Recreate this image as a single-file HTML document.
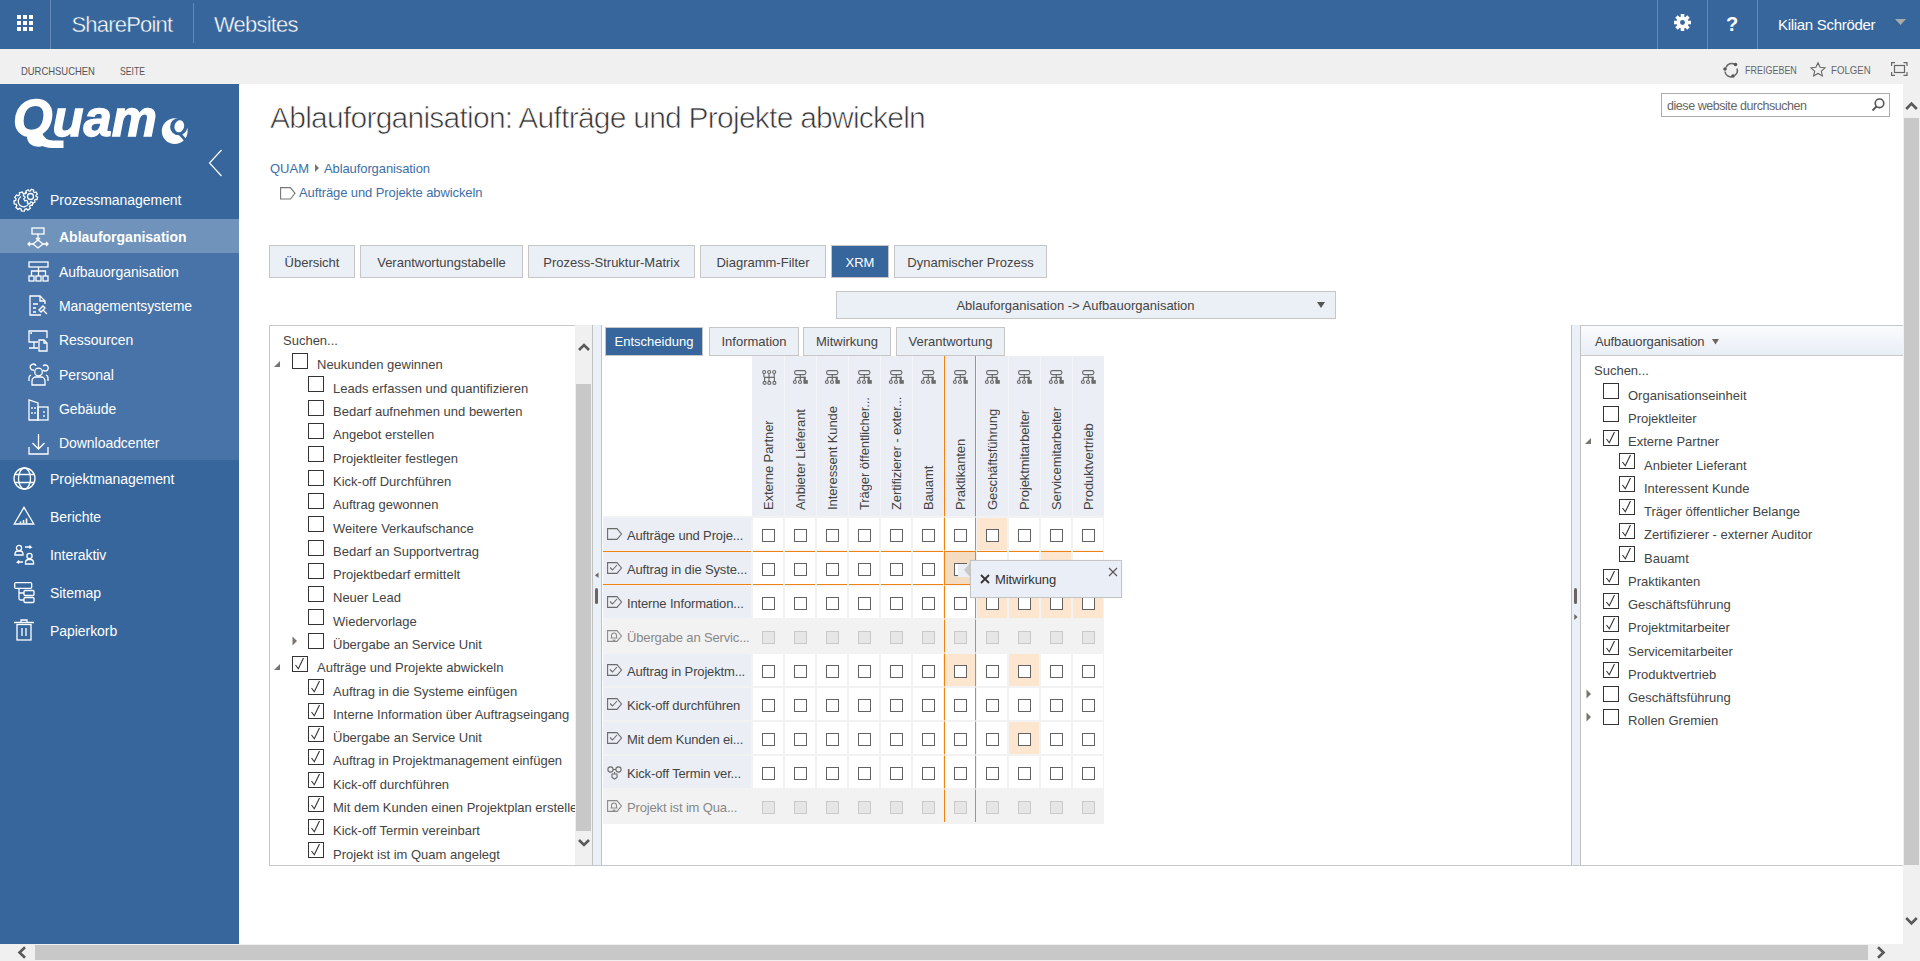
<!DOCTYPE html>
<html><head><meta charset="utf-8">
<style>
*{margin:0;padding:0;box-sizing:border-box}
html,body{width:1920px;height:961px;overflow:hidden;background:#fff;font-family:"Liberation Sans",sans-serif;color:#444}
.a{position:absolute;white-space:nowrap}
svg.a{overflow:visible}
.cb{position:absolute;width:16px;height:16px;border:1px solid #333;background:#fff}
.ck{position:absolute;width:13px;height:13px;border:1px solid #626262;background:#fff}
.dk{position:absolute;width:13px;height:13px;border:1px solid #c9c9c9;background:#e6e6e6}
.tab{position:absolute;height:33px;background:#ebeff6;border:1px solid #c6c6c6;font-size:13px;color:#444;text-align:center;line-height:33px}
</style></head><body>

<div class="a" style="left:0px;top:0px;width:1920px;height:49px;background:#36669b;"></div>
<svg class="a" style="left:17px;top:15px" width="17" height="17" viewBox="0 0 17 17" fill="#fff"><rect x="0" y="0" width="4" height="4"/><rect x="6" y="0" width="4" height="4"/><rect x="12" y="0" width="4" height="4"/><rect x="0" y="6" width="4" height="4"/><rect x="6" y="6" width="4" height="4"/><rect x="12" y="6" width="4" height="4"/><rect x="0" y="12" width="4" height="4"/><rect x="6" y="12" width="4" height="4"/><rect x="12" y="12" width="4" height="4"/></svg>
<div class="a" style="left:50px;top:0px;width:1px;height:49px;background:#6489b4;"></div>
<div class="a" style="left:193px;top:3px;width:1px;height:40px;background:#6489b4;"></div>
<div class="a" style="left:1657px;top:0px;width:1px;height:49px;background:#6489b4;"></div>
<div class="a" style="left:1707px;top:0px;width:1px;height:49px;background:#6489b4;"></div>
<div class="a" style="left:1757px;top:0px;width:1px;height:49px;background:#6489b4;"></div>
<div class="a" style="left:71.5px;top:12.59px;font-size:22px;line-height:24.57px;color:#fff;letter-spacing:-0.8px;-webkit-text-stroke:0.4px #36669b">SharePoint</div>
<div class="a" style="left:214px;top:12.59px;font-size:22px;line-height:24.57px;color:#fff;letter-spacing:-0.8px;-webkit-text-stroke:0.4px #36669b">Websites</div>
<svg class="a" style="left:1674px;top:14px" width="17" height="17" viewBox="0 0 16 16">
<g fill="#fff"><circle cx="8" cy="8" r="5.6"/>
<rect x="6.3" y="0" width="3.4" height="16"/><rect x="0" y="6.3" width="16" height="3.4"/>
<rect x="6.3" y="0" width="3.4" height="16" transform="rotate(45 8 8)"/><rect x="6.3" y="0" width="3.4" height="16" transform="rotate(-45 8 8)"/></g>
<circle cx="8" cy="8" r="2.3" fill="#36669b"/></svg>
<div class="a" style="left:1726px;top:12.90px;font-size:20px;line-height:22.34px;color:#fff;font-weight:700">?</div>
<div class="a" style="left:1778px;top:17.42px;font-size:15px;line-height:16.75px;color:#fff;letter-spacing:-0.3px">Kilian Schröder</div>
<svg class="a" style="left:1895px;top:19px" width="12" height="7"><path d="M0 0H11L5.5 6Z" fill="#a9a9a9"/></svg>
<div class="a" style="left:0px;top:49px;width:1920px;height:35px;background:#f0f0f0;"></div>
<div class="a" style="left:21px;top:64.89px;font-size:11.5px;line-height:12.85px;color:#555;transform:scaleX(0.82);transform-origin:0 0">DURCHSUCHEN</div>
<div class="a" style="left:120px;top:64.89px;font-size:11.5px;line-height:12.85px;color:#555;transform:scaleX(0.75);transform-origin:0 0">SEITE</div>
<svg class="a" style="left:1723px;top:62px" width="16" height="16" viewBox="0 0 16 16">
<path d="M3 5.5A6 6 0 0 1 12 2.5M14 6.5A6 6 0 0 1 11.5 13.5M9 14.8A6 6 0 0 1 2 9.5" stroke="#666" stroke-width="1.5" fill="none"/>
<circle cx="12.5" cy="2.5" r="1.8" fill="#555"/><circle cx="2" cy="7" r="1.8" fill="#555"/><circle cx="10" cy="14" r="1.8" fill="#555"/></svg>
<div class="a" style="left:1745px;top:63.89px;font-size:11.5px;line-height:12.85px;color:#666;transform:scaleX(0.78);transform-origin:0 0">FREIGEBEN</div>
<svg class="a" style="left:1810px;top:62px" width="16" height="15" viewBox="0 0 16 15">
<path d="M8 0.8L10.1 5.3L15 5.8L11.3 9.1L12.4 14L8 11.5L3.6 14L4.7 9.1L1 5.8L5.9 5.3Z" fill="none" stroke="#666" stroke-width="1.1"/></svg>
<div class="a" style="left:1831px;top:63.89px;font-size:11.5px;line-height:12.85px;color:#666;transform:scaleX(0.84);transform-origin:0 0">FOLGEN</div>
<svg class="a" style="left:1891px;top:62px" width="17" height="14" viewBox="0 0 17 14" fill="none" stroke="#666" stroke-width="1.2">
<path d="M0.6 4V0.6H4M12.5 0.6H16V4M16 10V13.4H12.5M4 13.4H0.6V10"/><rect x="3.5" y="3.5" width="10" height="7"/></svg>
<div class="a" style="left:0px;top:84px;width:239px;height:860px;background:#36669b;"></div>
<div class="a" style="left:0px;top:219px;width:239px;height:240.5px;background:#4773a8;"></div>
<div class="a" style="left:0px;top:219px;width:239px;height:34px;background:#7093bb;"></div>
<svg class="a" style="left:0;top:84px" width="239" height="80" viewBox="0 84 239 80">
<text x="13" y="136" font-family="Liberation Sans" font-weight="700" font-style="italic" font-size="52" fill="#fff" stroke="#fff" stroke-width="1.3" textLength="144" lengthAdjust="spacingAndGlyphs">Quam</text>
<path d="M32 133Q37 148 52 148L63.5 148L63.5 140.5L53 140.5Q45 140.5 42 133Z" fill="#fff"/>
<circle cx="174.7" cy="131.2" r="12.9" fill="#fff"/>
<circle cx="178.7" cy="126.7" r="8.6" fill="#36669b"/>
<ellipse cx="179.3" cy="126.3" rx="4.8" ry="6.1" fill="#fff" transform="rotate(12 179.3 126.3)"/>
<path d="M179.5 133.5L187 142" stroke="#36669b" stroke-width="2.8"/>
</svg>
<svg class="a" style="left:208px;top:149px" width="15" height="28"><path d="M13.5 1L1.5 14L13.5 27" stroke="#fff" stroke-width="1.2" fill="none"/></svg>
<div class="a" style="left:50px;top:193.33px;font-size:14px;line-height:15.64px;color:#fff;letter-spacing:-0.05px">Prozessmanagement</div>
<div class="a" style="left:50px;top:472.33px;font-size:14px;line-height:15.64px;color:#fff;letter-spacing:-0.05px">Projektmanagement</div>
<div class="a" style="left:50px;top:510.33px;font-size:14px;line-height:15.64px;color:#fff;letter-spacing:-0.05px">Berichte</div>
<div class="a" style="left:50px;top:548.33px;font-size:14px;line-height:15.64px;color:#fff;letter-spacing:-0.05px">Interaktiv</div>
<div class="a" style="left:50px;top:586.33px;font-size:14px;line-height:15.64px;color:#fff;letter-spacing:-0.05px">Sitemap</div>
<div class="a" style="left:50px;top:624.33px;font-size:14px;line-height:15.64px;color:#fff;letter-spacing:-0.05px">Papierkorb</div>
<div class="a" style="left:59px;top:230.33px;font-size:14px;line-height:15.64px;color:#fff;font-weight:700">Ablauforganisation</div>
<div class="a" style="left:59px;top:264.66px;font-size:14px;line-height:15.64px;color:#fff;letter-spacing:-0.05px">Aufbauorganisation</div>
<div class="a" style="left:59px;top:298.99px;font-size:14px;line-height:15.64px;color:#fff;letter-spacing:-0.05px">Managementsysteme</div>
<div class="a" style="left:59px;top:333.32px;font-size:14px;line-height:15.64px;color:#fff;letter-spacing:-0.05px">Ressourcen</div>
<div class="a" style="left:59px;top:367.65px;font-size:14px;line-height:15.64px;color:#fff;letter-spacing:-0.05px">Personal</div>
<div class="a" style="left:59px;top:401.98px;font-size:14px;line-height:15.64px;color:#fff;letter-spacing:-0.05px">Gebäude</div>
<div class="a" style="left:59px;top:436.31px;font-size:14px;line-height:15.64px;color:#fff;letter-spacing:-0.05px">Downloadcenter</div>
<svg class="a" style="left:0;top:180px" width="50" height="40" viewBox="0 180 50 40"><g stroke="#fff" stroke-width="1.3" fill="none"><path d="M31.40 201.50L33.07 202.30L32.35 205.22L30.50 205.16L29.55 206.58L30.31 208.26L27.89 210.04L26.51 208.80L24.87 209.28L24.37 211.06L21.37 210.86L21.11 209.03L19.55 208.34L18.02 209.38L15.85 207.30L16.83 205.73L16.08 204.20L14.24 204.02L13.91 201.03L15.67 200.46L16.08 198.80L14.79 197.47L16.46 194.98L18.17 195.67L19.55 194.66L19.41 192.81L22.30 191.98L23.17 193.61L24.87 193.72L25.95 192.22L28.70 193.43L28.32 195.24L29.55 196.42L31.34 195.97L32.67 198.66L31.22 199.80Z"/><path d="M21 196.5A5.5 5.5 0 1 0 28.5 204"/></g><path d="M36.10 196.50L37.67 197.18L36.99 199.62L35.30 199.39L34.46 200.46L35.09 202.05L32.89 203.29L31.85 201.93L30.50 202.10L29.82 203.67L27.38 202.99L27.61 201.30L26.54 200.46L24.95 201.09L23.71 198.89L25.07 197.85L24.90 196.50L23.33 195.82L24.01 193.38L25.70 193.61L26.54 192.54L25.91 190.95L28.11 189.71L29.15 191.07L30.50 190.90L31.18 189.33L33.62 190.01L33.39 191.70L34.46 192.54L36.05 191.91L37.29 194.11L35.93 195.15Z" fill="#36669b" stroke="#fff" stroke-width="1.2"/><circle cx="30.5" cy="196.5" r="3" stroke="#fff" stroke-width="1.3" fill="none"/></svg>
<svg class="a" style="left:13px;top:467px" width="23" height="23" viewBox="0 0 23 23"><g stroke="#fff" stroke-width="1.3" fill="none"><circle cx="11.5" cy="11.5" r="10.5"/><ellipse cx="11.5" cy="11.5" rx="6" ry="10.5"/><path d="M2 7.5H21M2 15.5H21"/></g></svg>
<svg class="a" style="left:13px;top:506px" width="22" height="20" viewBox="0 0 22 20"><g stroke="#fff" stroke-width="1.3" fill="none"><path d="M11 1.3L20.8 18H1.2Z"/><path d="M7.5 17.5V15.5M10.5 17.5V14M13.5 17.5V12.5" stroke-width="1.6"/></g></svg>
<svg class="a" style="left:14px;top:544px" width="22" height="22" viewBox="0 0 22 22"><g stroke="#fff" stroke-width="1.3" fill="none"><circle cx="5" cy="4" r="2.6"/><path d="M1 11V9.5A3 3 0 0 1 4 7H6A3 3 0 0 1 9 9.5V11Z"/><circle cx="15.5" cy="12" r="2.6"/><path d="M11.5 20V18A3 3 0 0 1 14.5 15.5H16.5A3 3 0 0 1 19.5 18V20Z"/><path d="M11 3H17L15.5 1.5M17 3L15.5 4.5M9 18H3.5L5 16.5M3.5 18L5 19.5"/></g></svg>
<svg class="a" style="left:14px;top:582px" width="21" height="22" viewBox="0 0 21 22"><g stroke="#fff" stroke-width="1.3" fill="none"><rect x="0.7" y="0.7" width="17" height="5.6" rx="1"/><rect x="10" y="8.5" width="10" height="5" rx="1"/><rect x="10" y="15.5" width="10" height="5" rx="1"/><path d="M5 6.3V16.5Q5 18 6.5 18H10M5 11H10"/></g></svg>
<svg class="a" style="left:14px;top:619px" width="21" height="22" viewBox="0 0 21 22"><g stroke="#fff" stroke-width="1.3" fill="none"><path d="M0 3.5H20M7 3.5V1H13V3.5"/><rect x="3" y="5.5" width="14" height="15.5"/><path d="M8 9V17M12 9V17"/></g></svg>
<svg class="a" style="left:27px;top:227px" width="22" height="22" viewBox="0 0 22 22"><g stroke="#fff" stroke-width="1.3" fill="none"><rect x="5" y="1" width="12" height="6"/><path d="M11 7V13M9 11L11 13L13 11"/><path d="M11 13L16 17L11 21L6 17Z"/><path d="M6 17H1M16 17H21M3 15L1 17L3 19M19 15L21 17L19 19"/></g></svg>
<svg class="a" style="left:28px;top:261px" width="21" height="21" viewBox="0 0 21 21"><g stroke="#fff" stroke-width="1.3" fill="none"><rect x="1" y="1" width="19" height="5"/><path d="M10.5 6V10M3.5 15V10H17.5V15M10.5 10V15"/><rect x="1" y="15" width="5" height="5"/><rect x="8" y="15" width="5" height="5"/><rect x="15" y="15" width="5" height="5"/></g></svg>
<svg class="a" style="left:29px;top:295px" width="20" height="22" viewBox="0 0 20 22"><g stroke="#fff" stroke-width="1.3" fill="none"><path d="M12 20H1V1H11L16 6V9"/><path d="M11 1V6H16M4 9H9M4 13H7M4 17H7"/><path d="M10 15L14 11L16 13L12 17ZM14 15L18 19"/></g></svg>
<svg class="a" style="left:28px;top:330px" width="21" height="22" viewBox="0 0 21 22"><g stroke="#fff" stroke-width="1.3" fill="none"><path d="M19 8V1H1V12H10"/><path d="M3 4V3H4"/><path d="M1 18H10M6 12V18"/><path d="M11 21V10H16L19 13V21Z"/><path d="M16 10V13H19"/></g></svg>
<svg class="a" style="left:28px;top:364px" width="21" height="22" viewBox="0 0 21 22"><g stroke="#fff" stroke-width="1.3" fill="none"><circle cx="10.5" cy="8" r="3.8"/><path d="M4 21V17A4 4 0 0 1 8 13H13A4 4 0 0 1 17 17V21Z"/><path d="M6 6A3 3 0 1 1 8 2M15 2A3 3 0 1 1 15 6M1 17V14A3 3 0 0 1 3 11M20 17V14A3 3 0 0 0 18 11"/></g></svg>
<svg class="a" style="left:28px;top:399px" width="21" height="22" viewBox="0 0 21 22"><g stroke="#fff" stroke-width="1.3" fill="none"><path d="M1 21V1L10 4V21Z"/><rect x="10" y="8" width="10" height="13"/><path d="M4 8V10M4 13V15M7 8V10M7 13V15M16 12V14M16 16V18"/></g></svg>
<svg class="a" style="left:28px;top:433px" width="21" height="22" viewBox="0 0 21 22"><g stroke="#fff" stroke-width="1.3" fill="none"><path d="M1 14V21H20V14M10.5 1V16M4.5 10L10.5 16L16.5 10"/></g></svg>
<div class="a" style="left:270px;top:101.25px;font-size:30px;line-height:33.51px;color:#333;font-weight:300;letter-spacing:-0.76px;-webkit-text-stroke:0.7px #fff">Ablauforganisation: Aufträge und Projekte abwickeln</div>
<div class="a" style="left:270px;top:162.04px;font-size:13px;line-height:14.52px;color:#3d6fa6">QUAM</div>
<svg class="a" style="left:314px;top:163px" width="6" height="10"><path d="M1 1L5 5L1 9Z" fill="#777"/></svg>
<div class="a" style="left:324px;top:162.04px;font-size:13px;line-height:14.52px;color:#3d6fa6;letter-spacing:-0.1px">Ablauforganisation</div>
<svg class="a" style="left:280px;top:187px" width="16" height="13" viewBox="0 0 16 13"><path d="M0.6 0.6H10.5L15 6.3L10.5 12H0.6Z" fill="none" stroke="#777" stroke-width="1.1"/></svg>
<div class="a" style="left:299px;top:185.94px;font-size:13px;line-height:14.52px;color:#3d6fa6;letter-spacing:-0.1px">Aufträge und Projekte abwickeln</div>
<div class="a" style="left:1661px;top:93px;width:229px;height:24px;border:1px solid #ababab;background:#fff"></div>
<div class="a" style="left:1667px;top:100.19px;font-size:12.5px;line-height:13.96px;color:#666;letter-spacing:-0.45px">diese website durchsuchen</div>
<svg class="a" style="left:1870px;top:97px" width="16" height="16" viewBox="0 0 16 16"><circle cx="9.5" cy="6.3" r="4.3" stroke="#555" stroke-width="1.6" fill="none"/><path d="M6.5 9.5L2.5 13.5" stroke="#555" stroke-width="1.8"/></svg>
<div class="tab" style="left:269px;top:245px;width:86px">Übersicht</div>
<div class="tab" style="left:360px;top:245px;width:163px">Verantwortungstabelle</div>
<div class="tab" style="left:528px;top:245px;width:167px">Prozess-Struktur-Matrix</div>
<div class="tab" style="left:700px;top:245px;width:126px">Diagramm-Filter</div>
<div class="tab" style="left:831px;top:245px;width:58px;background:#36669b;border-color:#c6c6c6;color:#fff">XRM</div>
<div class="tab" style="left:894px;top:245px;width:153px">Dynamischer Prozess</div>
<div class="tab" style="left:836px;top:291px;width:500px;height:28px;line-height:27px;padding-right:21px">Ablauforganisation -&gt; Aufbauorganisation</div>
<svg class="a" style="left:1317px;top:302px" width="9" height="7"><path d="M0 0H8L4 6Z" fill="#555"/></svg>
<div class="a" style="left:269px;top:325px;width:307px;height:541px;border:1px solid #c8c8c8;border-right:none;background:#fff"></div>
<div class="a" style="left:269px;top:865px;width:1634px;height:1px;background:#c8c8c8;"></div>
<div class="a" style="left:575px;top:325px;width:17px;height:540px;background:#f0f0f0;"></div>
<div class="a" style="left:576px;top:384px;width:15px;height:447px;background:#c8c8c8;"></div>
<svg class="a" style="left:578px;top:342px" width="12" height="9"><path d="M1 8L6 3L11 8" stroke="#595959" stroke-width="2.6" fill="none"/></svg>
<svg class="a" style="left:578px;top:839px" width="12" height="9"><path d="M1 1L6 6L11 1" stroke="#595959" stroke-width="2.6" fill="none"/></svg>
<div class="a" style="left:592px;top:325px;width:10px;height:540px;background:#eaf0f8;border-left:1px solid #c2c2c2;border-right:1px solid #c2c2c2"></div>
<svg class="a" style="left:595px;top:572px" width="5" height="7"><path d="M3.5 0.5V6L0 3.25Z" fill="#6d6460"/></svg>
<div class="a" style="left:595px;top:588px;width:3px;height:16px;background:#6d6460;border-radius:1.5px"></div>
<div class="a" style="left:1571px;top:325px;width:10px;height:540px;background:#eaf0f8;border-left:1px solid #c2c2c2;border-right:1px solid #c2c2c2"></div>
<div class="a" style="left:1574px;top:588px;width:3px;height:16px;background:#6d6460;border-radius:1.5px"></div>
<svg class="a" style="left:1574px;top:614px" width="5" height="7"><path d="M0.3 0V6L3.6 3Z" fill="#6d6460"/></svg>
<div class="a" style="left:1581px;top:325px;width:322px;height:31px;background:linear-gradient(#fafbfd,#e9eef6);border-top:1px solid #c8c8c8;border-bottom:1px solid #c8c8c8"></div>
<div class="a" style="left:1595px;top:335.24px;font-size:13px;line-height:14.52px;color:#444;letter-spacing:-0.15px">Aufbauorganisation</div>
<svg class="a" style="left:1712px;top:339px" width="8" height="6"><path d="M0 0H7L3.5 5.5Z" fill="#6d6460"/></svg>
<div class="a" style="left:1903px;top:84px;width:17px;height:860px;background:#f0f0f0;"></div>
<div class="a" style="left:1904px;top:118px;width:15px;height:747px;background:#c8c8c8;"></div>
<svg class="a" style="left:1905px;top:100px" width="13" height="10"><path d="M1.2 9L6.5 3.5L11.8 9" stroke="#595959" stroke-width="2.6" fill="none"/></svg>
<svg class="a" style="left:1905px;top:917px" width="13" height="10"><path d="M1.2 1L6.5 6.5L11.8 1" stroke="#595959" stroke-width="2.6" fill="none"/></svg>
<div class="a" style="left:0px;top:944px;width:1920px;height:17px;background:#f0f0f0;"></div>
<div class="a" style="left:35px;top:945px;width:1833px;height:15px;background:#c8c8c8;"></div>
<svg class="a" style="left:16px;top:946px" width="10" height="13"><path d="M9 1.2L3.5 6.5L9 11.8" stroke="#595959" stroke-width="2.6" fill="none"/></svg>
<svg class="a" style="left:1877px;top:946px" width="10" height="13"><path d="M1 1.2L6.5 6.5L1 11.8" stroke="#595959" stroke-width="2.6" fill="none"/></svg>
<div class="a" style="left:283px;top:334.24px;font-size:13px;line-height:14.52px;color:#444">Suchen...</div>
<div class="a" style="left:270px;top:326px;width:305px;height:539px;overflow:hidden">
<div class="cb" style="left:22px;top:27px"></div>
<svg class="a" style="left:4px;top:35px" width="7" height="7"><path d="M6 0V6H0Z" fill="#7a7470"/></svg>
<div class="a" style="left:47px;top:32.49px;font-size:13px;line-height:14.5px;color:#444">Neukunden gewinnen</div>
<div class="cb" style="left:38px;top:50px"></div>
<div class="a" style="left:63px;top:55.78px;font-size:13px;line-height:14.5px;color:#444">Leads erfassen und quantifizieren</div>
<div class="cb" style="left:38px;top:74px"></div>
<div class="a" style="left:63px;top:79.06px;font-size:13px;line-height:14.5px;color:#444">Bedarf aufnehmen und bewerten</div>
<div class="cb" style="left:38px;top:97px"></div>
<div class="a" style="left:63px;top:102.36px;font-size:13px;line-height:14.5px;color:#444">Angebot erstellen</div>
<div class="cb" style="left:38px;top:120px"></div>
<div class="a" style="left:63px;top:125.64px;font-size:13px;line-height:14.5px;color:#444">Projektleiter festlegen</div>
<div class="cb" style="left:38px;top:144px"></div>
<div class="a" style="left:63px;top:148.94px;font-size:13px;line-height:14.5px;color:#444">Kick-off Durchführen</div>
<div class="cb" style="left:38px;top:167px"></div>
<div class="a" style="left:63px;top:172.23px;font-size:13px;line-height:14.5px;color:#444">Auftrag gewonnen</div>
<div class="cb" style="left:38px;top:190px"></div>
<div class="a" style="left:63px;top:195.51px;font-size:13px;line-height:14.5px;color:#444">Weitere Verkaufschance</div>
<div class="cb" style="left:38px;top:214px"></div>
<div class="a" style="left:63px;top:218.80px;font-size:13px;line-height:14.5px;color:#444">Bedarf an Supportvertrag</div>
<div class="cb" style="left:38px;top:237px"></div>
<div class="a" style="left:63px;top:242.10px;font-size:13px;line-height:14.5px;color:#444">Projektbedarf ermittelt</div>
<div class="cb" style="left:38px;top:260px"></div>
<div class="a" style="left:63px;top:265.38px;font-size:13px;line-height:14.5px;color:#444">Neuer Lead</div>
<div class="cb" style="left:38px;top:283px"></div>
<div class="a" style="left:63px;top:288.68px;font-size:13px;line-height:14.5px;color:#444">Wiedervorlage</div>
<div class="cb" style="left:38px;top:307px"></div>
<svg class="a" style="left:22px;top:310px" width="6" height="10"><path d="M0.5 0.5L5 5L0.5 9.5Z" fill="#7a7470"/></svg>
<div class="a" style="left:63px;top:311.97px;font-size:13px;line-height:14.5px;color:#444">Übergabe an Service Unit</div>
<div class="cb" style="left:22px;top:330px"></div>
<svg class="a" style="left:22px;top:330px" width="16" height="16"><path d="M3.5 9L6.3 12.8L11.5 2" stroke="#333" stroke-width="1.1" fill="none"/></svg>
<svg class="a" style="left:4px;top:338px" width="7" height="7"><path d="M6 0V6H0Z" fill="#7a7470"/></svg>
<div class="a" style="left:47px;top:335.25px;font-size:13px;line-height:14.5px;color:#444">Aufträge und Projekte abwickeln</div>
<div class="cb" style="left:38px;top:353px"></div>
<svg class="a" style="left:38px;top:353px" width="16" height="16"><path d="M3.5 9L6.3 12.8L11.5 2" stroke="#333" stroke-width="1.1" fill="none"/></svg>
<div class="a" style="left:63px;top:358.54px;font-size:13px;line-height:14.5px;color:#444">Auftrag in die Systeme einfügen</div>
<div class="cb" style="left:38px;top:377px"></div>
<svg class="a" style="left:38px;top:377px" width="16" height="16"><path d="M3.5 9L6.3 12.8L11.5 2" stroke="#333" stroke-width="1.1" fill="none"/></svg>
<div class="a" style="left:63px;top:381.83px;font-size:13px;line-height:14.5px;color:#444">Interne Information über Auftragseingang</div>
<div class="cb" style="left:38px;top:400px"></div>
<svg class="a" style="left:38px;top:400px" width="16" height="16"><path d="M3.5 9L6.3 12.8L11.5 2" stroke="#333" stroke-width="1.1" fill="none"/></svg>
<div class="a" style="left:63px;top:405.12px;font-size:13px;line-height:14.5px;color:#444">Übergabe an Service Unit</div>
<div class="cb" style="left:38px;top:423px"></div>
<svg class="a" style="left:38px;top:423px" width="16" height="16"><path d="M3.5 9L6.3 12.8L11.5 2" stroke="#333" stroke-width="1.1" fill="none"/></svg>
<div class="a" style="left:63px;top:428.42px;font-size:13px;line-height:14.5px;color:#444">Auftrag in Projektmanagement einfügen</div>
<div class="cb" style="left:38px;top:446px"></div>
<svg class="a" style="left:38px;top:446px" width="16" height="16"><path d="M3.5 9L6.3 12.8L11.5 2" stroke="#333" stroke-width="1.1" fill="none"/></svg>
<div class="a" style="left:63px;top:451.71px;font-size:13px;line-height:14.5px;color:#444">Kick-off durchführen</div>
<div class="cb" style="left:38px;top:470px"></div>
<svg class="a" style="left:38px;top:470px" width="16" height="16"><path d="M3.5 9L6.3 12.8L11.5 2" stroke="#333" stroke-width="1.1" fill="none"/></svg>
<div class="a" style="left:63px;top:475.00px;font-size:13px;line-height:14.5px;color:#444">Mit dem Kunden einen Projektplan erstellen</div>
<div class="cb" style="left:38px;top:493px"></div>
<svg class="a" style="left:38px;top:493px" width="16" height="16"><path d="M3.5 9L6.3 12.8L11.5 2" stroke="#333" stroke-width="1.1" fill="none"/></svg>
<div class="a" style="left:63px;top:498.28px;font-size:13px;line-height:14.5px;color:#444">Kick-off Termin vereinbart</div>
<div class="cb" style="left:38px;top:516px"></div>
<svg class="a" style="left:38px;top:516px" width="16" height="16"><path d="M3.5 9L6.3 12.8L11.5 2" stroke="#333" stroke-width="1.1" fill="none"/></svg>
<div class="a" style="left:63px;top:521.57px;font-size:13px;line-height:14.5px;color:#444">Projekt ist im Quam angelegt</div>
</div>
<div class="a" style="left:1594px;top:363.63px;font-size:13px;line-height:14.52px;color:#444">Suchen...</div>
<div class="cb" style="left:1603px;top:383px"></div>
<div class="a" style="left:1628px;top:388.74px;font-size:13px;line-height:14.52px;color:#444">Organisationseinheit</div>
<div class="cb" style="left:1603px;top:406px"></div>
<div class="a" style="left:1628px;top:412.00px;font-size:13px;line-height:14.52px;color:#444">Projektleiter</div>
<div class="cb" style="left:1603px;top:430px"></div>
<svg class="a" style="left:1603px;top:430px" width="16" height="16"><path d="M3.5 9L6.3 12.8L11.5 2" stroke="#333" stroke-width="1.1" fill="none"/></svg>
<svg class="a" style="left:1585px;top:438px" width="7" height="7"><path d="M6 0V6H0Z" fill="#7a7470"/></svg>
<div class="a" style="left:1628px;top:435.25px;font-size:13px;line-height:14.52px;color:#444">Externe Partner</div>
<div class="cb" style="left:1619px;top:453px"></div>
<svg class="a" style="left:1619px;top:453px" width="16" height="16"><path d="M3.5 9L6.3 12.8L11.5 2" stroke="#333" stroke-width="1.1" fill="none"/></svg>
<div class="a" style="left:1644px;top:458.51px;font-size:13px;line-height:14.52px;color:#444">Anbieter Lieferant</div>
<div class="cb" style="left:1619px;top:476px"></div>
<svg class="a" style="left:1619px;top:476px" width="16" height="16"><path d="M3.5 9L6.3 12.8L11.5 2" stroke="#333" stroke-width="1.1" fill="none"/></svg>
<div class="a" style="left:1644px;top:481.78px;font-size:13px;line-height:14.52px;color:#444">Interessent Kunde</div>
<div class="cb" style="left:1619px;top:499px"></div>
<svg class="a" style="left:1619px;top:499px" width="16" height="16"><path d="M3.5 9L6.3 12.8L11.5 2" stroke="#333" stroke-width="1.1" fill="none"/></svg>
<div class="a" style="left:1644px;top:505.03px;font-size:13px;line-height:14.52px;color:#444">Träger öffentlicher Belange</div>
<div class="cb" style="left:1619px;top:523px"></div>
<svg class="a" style="left:1619px;top:523px" width="16" height="16"><path d="M3.5 9L6.3 12.8L11.5 2" stroke="#333" stroke-width="1.1" fill="none"/></svg>
<div class="a" style="left:1644px;top:528.29px;font-size:13px;line-height:14.52px;color:#444">Zertifizierer - externer Auditor</div>
<div class="cb" style="left:1619px;top:546px"></div>
<svg class="a" style="left:1619px;top:546px" width="16" height="16"><path d="M3.5 9L6.3 12.8L11.5 2" stroke="#333" stroke-width="1.1" fill="none"/></svg>
<div class="a" style="left:1644px;top:551.56px;font-size:13px;line-height:14.52px;color:#444">Bauamt</div>
<div class="cb" style="left:1603px;top:569px"></div>
<svg class="a" style="left:1603px;top:569px" width="16" height="16"><path d="M3.5 9L6.3 12.8L11.5 2" stroke="#333" stroke-width="1.1" fill="none"/></svg>
<div class="a" style="left:1628px;top:574.82px;font-size:13px;line-height:14.52px;color:#444">Praktikanten</div>
<div class="cb" style="left:1603px;top:593px"></div>
<svg class="a" style="left:1603px;top:593px" width="16" height="16"><path d="M3.5 9L6.3 12.8L11.5 2" stroke="#333" stroke-width="1.1" fill="none"/></svg>
<div class="a" style="left:1628px;top:598.08px;font-size:13px;line-height:14.52px;color:#444">Geschäftsführung</div>
<div class="cb" style="left:1603px;top:616px"></div>
<svg class="a" style="left:1603px;top:616px" width="16" height="16"><path d="M3.5 9L6.3 12.8L11.5 2" stroke="#333" stroke-width="1.1" fill="none"/></svg>
<div class="a" style="left:1628px;top:621.34px;font-size:13px;line-height:14.52px;color:#444">Projektmitarbeiter</div>
<div class="cb" style="left:1603px;top:639px"></div>
<svg class="a" style="left:1603px;top:639px" width="16" height="16"><path d="M3.5 9L6.3 12.8L11.5 2" stroke="#333" stroke-width="1.1" fill="none"/></svg>
<div class="a" style="left:1628px;top:644.60px;font-size:13px;line-height:14.52px;color:#444">Servicemitarbeiter</div>
<div class="cb" style="left:1603px;top:662px"></div>
<svg class="a" style="left:1603px;top:662px" width="16" height="16"><path d="M3.5 9L6.3 12.8L11.5 2" stroke="#333" stroke-width="1.1" fill="none"/></svg>
<div class="a" style="left:1628px;top:667.86px;font-size:13px;line-height:14.52px;color:#444">Produktvertrieb</div>
<div class="cb" style="left:1603px;top:686px"></div>
<svg class="a" style="left:1586px;top:689px" width="6" height="10"><path d="M0.5 0.5L5 5L0.5 9.5Z" fill="#7a7470"/></svg>
<div class="a" style="left:1628px;top:691.12px;font-size:13px;line-height:14.52px;color:#444">Geschäftsführung</div>
<div class="cb" style="left:1603px;top:709px"></div>
<svg class="a" style="left:1586px;top:712px" width="6" height="10"><path d="M0.5 0.5L5 5L0.5 9.5Z" fill="#7a7470"/></svg>
<div class="a" style="left:1628px;top:714.38px;font-size:13px;line-height:14.52px;color:#444">Rollen Gremien</div>
<div class="tab" style="left:605px;top:327px;width:98px;height:29px;line-height:27px;background:#36669b;color:#fff;border-color:#c6c6c6">Entscheidung</div>
<div class="tab" style="left:709px;top:327px;width:90px;height:29px;line-height:27px">Information</div>
<div class="tab" style="left:803px;top:327px;width:88px;height:29px;line-height:27px">Mitwirkung</div>
<div class="tab" style="left:896px;top:327px;width:109px;height:29px;line-height:27px">Verantwortung</div>
<div class="a" style="left:752px;top:356px;width:352px;height:160px;background:#ebeff5;"></div>
<div class="a" style="left:783.5px;top:356px;width:1px;height:160px;background:#f3f5f8;"></div>
<div class="a" style="left:815.5px;top:356px;width:1px;height:160px;background:#f3f5f8;"></div>
<div class="a" style="left:847.5px;top:356px;width:1px;height:160px;background:#f3f5f8;"></div>
<div class="a" style="left:879.5px;top:356px;width:1px;height:160px;background:#f3f5f8;"></div>
<div class="a" style="left:911.5px;top:356px;width:1px;height:160px;background:#f3f5f8;"></div>
<div class="a" style="left:943.5px;top:356px;width:1px;height:160px;background:#f3f5f8;"></div>
<div class="a" style="left:975.5px;top:356px;width:1px;height:160px;background:#f3f5f8;"></div>
<div class="a" style="left:1007.5px;top:356px;width:1px;height:160px;background:#f3f5f8;"></div>
<div class="a" style="left:1039.5px;top:356px;width:1px;height:160px;background:#f3f5f8;"></div>
<div class="a" style="left:1071.5px;top:356px;width:1px;height:160px;background:#f3f5f8;"></div>
<svg class="a" style="left:762px;top:369px" width="16" height="17" viewBox="0 0 16 17"><g fill="none" stroke="#6a6a6a" stroke-width="1.15"><circle cx="2.2" cy="3" r="1.5"/><circle cx="7.2" cy="3" r="1.5"/><circle cx="12.2" cy="3" r="1.5"/><circle cx="2.6" cy="13.9" r="1.5"/><circle cx="7.3" cy="13.9" r="1.5"/><circle cx="12.4" cy="13.9" r="1.5"/><path d="M1.9 4.5V8.3M7 4.5V12.4M12.2 4.5V8.3M2.5 8.3H12.2M2.6 8.3V12.4M12.4 8.3V12.4"/></g></svg>
<div class="a" style="left:759px;top:393px;width:20px;height:117px;font-size:13px;line-height:20px;color:#444;writing-mode:vertical-rl;transform:rotate(180deg);text-align:left;overflow:hidden;letter-spacing:-0.1px">Externe Partner</div>
<svg class="a" style="left:793px;top:369px" width="16" height="16" viewBox="0 0 16 16"><g fill="none" stroke="#6a6a6a" stroke-width="1.15"><rect x="1.6" y="1.6" width="11.3" height="4" rx="1.8"/><path d="M7.3 5.6V8.4M2.3 11.6V9.6Q2.3 8.4 3.5 8.4H12.5M7.3 8.4V11.6"/><circle cx="1.9" cy="13" r="1.5"/><circle cx="7" cy="13" r="1.5"/></g><rect x="10.6" y="7.8" width="2.2" height="4" fill="#6a6a6a"/><rect x="10.4" y="11.1" width="4.4" height="3.7" fill="#6a6a6a"/></svg>
<div class="a" style="left:791px;top:393px;width:20px;height:117px;font-size:13px;line-height:20px;color:#444;writing-mode:vertical-rl;transform:rotate(180deg);text-align:left;overflow:hidden;letter-spacing:-0.1px">Anbieter Lieferant</div>
<svg class="a" style="left:825px;top:369px" width="16" height="16" viewBox="0 0 16 16"><g fill="none" stroke="#6a6a6a" stroke-width="1.15"><rect x="1.6" y="1.6" width="11.3" height="4" rx="1.8"/><path d="M7.3 5.6V8.4M2.3 11.6V9.6Q2.3 8.4 3.5 8.4H12.5M7.3 8.4V11.6"/><circle cx="1.9" cy="13" r="1.5"/><circle cx="7" cy="13" r="1.5"/></g><rect x="10.6" y="7.8" width="2.2" height="4" fill="#6a6a6a"/><rect x="10.4" y="11.1" width="4.4" height="3.7" fill="#6a6a6a"/></svg>
<div class="a" style="left:823px;top:393px;width:20px;height:117px;font-size:13px;line-height:20px;color:#444;writing-mode:vertical-rl;transform:rotate(180deg);text-align:left;overflow:hidden;letter-spacing:-0.1px">Interessent Kunde</div>
<svg class="a" style="left:857px;top:369px" width="16" height="16" viewBox="0 0 16 16"><g fill="none" stroke="#6a6a6a" stroke-width="1.15"><rect x="1.6" y="1.6" width="11.3" height="4" rx="1.8"/><path d="M7.3 5.6V8.4M2.3 11.6V9.6Q2.3 8.4 3.5 8.4H12.5M7.3 8.4V11.6"/><circle cx="1.9" cy="13" r="1.5"/><circle cx="7" cy="13" r="1.5"/></g><rect x="10.6" y="7.8" width="2.2" height="4" fill="#6a6a6a"/><rect x="10.4" y="11.1" width="4.4" height="3.7" fill="#6a6a6a"/></svg>
<div class="a" style="left:855px;top:393px;width:20px;height:117px;font-size:13px;line-height:20px;color:#444;writing-mode:vertical-rl;transform:rotate(180deg);text-align:left;overflow:hidden;letter-spacing:-0.1px">Träger öffentlicher...</div>
<svg class="a" style="left:889px;top:369px" width="16" height="16" viewBox="0 0 16 16"><g fill="none" stroke="#6a6a6a" stroke-width="1.15"><rect x="1.6" y="1.6" width="11.3" height="4" rx="1.8"/><path d="M7.3 5.6V8.4M2.3 11.6V9.6Q2.3 8.4 3.5 8.4H12.5M7.3 8.4V11.6"/><circle cx="1.9" cy="13" r="1.5"/><circle cx="7" cy="13" r="1.5"/></g><rect x="10.6" y="7.8" width="2.2" height="4" fill="#6a6a6a"/><rect x="10.4" y="11.1" width="4.4" height="3.7" fill="#6a6a6a"/></svg>
<div class="a" style="left:887px;top:393px;width:20px;height:117px;font-size:13px;line-height:20px;color:#444;writing-mode:vertical-rl;transform:rotate(180deg);text-align:left;overflow:hidden;letter-spacing:-0.1px">Zertifizierer - exter...</div>
<svg class="a" style="left:921px;top:369px" width="16" height="16" viewBox="0 0 16 16"><g fill="none" stroke="#6a6a6a" stroke-width="1.15"><rect x="1.6" y="1.6" width="11.3" height="4" rx="1.8"/><path d="M7.3 5.6V8.4M2.3 11.6V9.6Q2.3 8.4 3.5 8.4H12.5M7.3 8.4V11.6"/><circle cx="1.9" cy="13" r="1.5"/><circle cx="7" cy="13" r="1.5"/></g><rect x="10.6" y="7.8" width="2.2" height="4" fill="#6a6a6a"/><rect x="10.4" y="11.1" width="4.4" height="3.7" fill="#6a6a6a"/></svg>
<div class="a" style="left:919px;top:393px;width:20px;height:117px;font-size:13px;line-height:20px;color:#444;writing-mode:vertical-rl;transform:rotate(180deg);text-align:left;overflow:hidden;letter-spacing:-0.1px">Bauamt</div>
<svg class="a" style="left:953px;top:369px" width="16" height="16" viewBox="0 0 16 16"><g fill="none" stroke="#6a6a6a" stroke-width="1.15"><rect x="1.6" y="1.6" width="11.3" height="4" rx="1.8"/><path d="M7.3 5.6V8.4M2.3 11.6V9.6Q2.3 8.4 3.5 8.4H12.5M7.3 8.4V11.6"/><circle cx="1.9" cy="13" r="1.5"/><circle cx="7" cy="13" r="1.5"/></g><rect x="10.6" y="7.8" width="2.2" height="4" fill="#6a6a6a"/><rect x="10.4" y="11.1" width="4.4" height="3.7" fill="#6a6a6a"/></svg>
<div class="a" style="left:951px;top:393px;width:20px;height:117px;font-size:13px;line-height:20px;color:#444;writing-mode:vertical-rl;transform:rotate(180deg);text-align:left;overflow:hidden;letter-spacing:-0.1px">Praktikanten</div>
<svg class="a" style="left:985px;top:369px" width="16" height="16" viewBox="0 0 16 16"><g fill="none" stroke="#6a6a6a" stroke-width="1.15"><rect x="1.6" y="1.6" width="11.3" height="4" rx="1.8"/><path d="M7.3 5.6V8.4M2.3 11.6V9.6Q2.3 8.4 3.5 8.4H12.5M7.3 8.4V11.6"/><circle cx="1.9" cy="13" r="1.5"/><circle cx="7" cy="13" r="1.5"/></g><rect x="10.6" y="7.8" width="2.2" height="4" fill="#6a6a6a"/><rect x="10.4" y="11.1" width="4.4" height="3.7" fill="#6a6a6a"/></svg>
<div class="a" style="left:983px;top:393px;width:20px;height:117px;font-size:13px;line-height:20px;color:#444;writing-mode:vertical-rl;transform:rotate(180deg);text-align:left;overflow:hidden;letter-spacing:-0.1px">Geschäftsführung</div>
<svg class="a" style="left:1017px;top:369px" width="16" height="16" viewBox="0 0 16 16"><g fill="none" stroke="#6a6a6a" stroke-width="1.15"><rect x="1.6" y="1.6" width="11.3" height="4" rx="1.8"/><path d="M7.3 5.6V8.4M2.3 11.6V9.6Q2.3 8.4 3.5 8.4H12.5M7.3 8.4V11.6"/><circle cx="1.9" cy="13" r="1.5"/><circle cx="7" cy="13" r="1.5"/></g><rect x="10.6" y="7.8" width="2.2" height="4" fill="#6a6a6a"/><rect x="10.4" y="11.1" width="4.4" height="3.7" fill="#6a6a6a"/></svg>
<div class="a" style="left:1015px;top:393px;width:20px;height:117px;font-size:13px;line-height:20px;color:#444;writing-mode:vertical-rl;transform:rotate(180deg);text-align:left;overflow:hidden;letter-spacing:-0.1px">Projektmitarbeiter</div>
<svg class="a" style="left:1049px;top:369px" width="16" height="16" viewBox="0 0 16 16"><g fill="none" stroke="#6a6a6a" stroke-width="1.15"><rect x="1.6" y="1.6" width="11.3" height="4" rx="1.8"/><path d="M7.3 5.6V8.4M2.3 11.6V9.6Q2.3 8.4 3.5 8.4H12.5M7.3 8.4V11.6"/><circle cx="1.9" cy="13" r="1.5"/><circle cx="7" cy="13" r="1.5"/></g><rect x="10.6" y="7.8" width="2.2" height="4" fill="#6a6a6a"/><rect x="10.4" y="11.1" width="4.4" height="3.7" fill="#6a6a6a"/></svg>
<div class="a" style="left:1047px;top:393px;width:20px;height:117px;font-size:13px;line-height:20px;color:#444;writing-mode:vertical-rl;transform:rotate(180deg);text-align:left;overflow:hidden;letter-spacing:-0.1px">Servicemitarbeiter</div>
<svg class="a" style="left:1081px;top:369px" width="16" height="16" viewBox="0 0 16 16"><g fill="none" stroke="#6a6a6a" stroke-width="1.15"><rect x="1.6" y="1.6" width="11.3" height="4" rx="1.8"/><path d="M7.3 5.6V8.4M2.3 11.6V9.6Q2.3 8.4 3.5 8.4H12.5M7.3 8.4V11.6"/><circle cx="1.9" cy="13" r="1.5"/><circle cx="7" cy="13" r="1.5"/></g><rect x="10.6" y="7.8" width="2.2" height="4" fill="#6a6a6a"/><rect x="10.4" y="11.1" width="4.4" height="3.7" fill="#6a6a6a"/></svg>
<div class="a" style="left:1079px;top:393px;width:20px;height:117px;font-size:13px;line-height:20px;color:#444;writing-mode:vertical-rl;transform:rotate(180deg);text-align:left;overflow:hidden;letter-spacing:-0.1px">Produktvertrieb</div>
<div class="a" style="left:603px;top:516px;width:501px;height:306px;background:#f2f2f2;"></div>
<div class="a" style="left:603px;top:518px;width:148px;height:32px;background:#ebeff5;"></div>
<svg class="a" style="left:607px;top:528px" width="16" height="14" viewBox="0 0 16 14"><g fill="none" stroke="#6a6a6a" stroke-width="1.1"><path d="M0.6 0.6H10L14.5 6L10 11.4H0.6Z"/></g></svg>
<div class="a" style="left:627px;top:528.63px;font-size:13px;line-height:14.52px;color:#444;letter-spacing:-0.15px">Aufträge und Proje...</div>
<div class="a" style="left:753px;top:518px;width:30px;height:32px;background:#fff;"></div>
<div class="ck" style="left:762px;top:529px"></div>
<div class="a" style="left:785px;top:518px;width:30px;height:32px;background:#fff;"></div>
<div class="ck" style="left:794px;top:529px"></div>
<div class="a" style="left:817px;top:518px;width:30px;height:32px;background:#fff;"></div>
<div class="ck" style="left:826px;top:529px"></div>
<div class="a" style="left:849px;top:518px;width:30px;height:32px;background:#fff;"></div>
<div class="ck" style="left:858px;top:529px"></div>
<div class="a" style="left:881px;top:518px;width:30px;height:32px;background:#fff;"></div>
<div class="ck" style="left:890px;top:529px"></div>
<div class="a" style="left:913px;top:518px;width:30px;height:32px;background:#fff;"></div>
<div class="ck" style="left:922px;top:529px"></div>
<div class="a" style="left:945px;top:518px;width:30px;height:32px;background:#fff;"></div>
<div class="ck" style="left:954px;top:529px"></div>
<div class="a" style="left:977px;top:518px;width:30px;height:32px;background:#fde6cf;"></div>
<div class="ck" style="left:986px;top:529px"></div>
<div class="a" style="left:1009px;top:518px;width:30px;height:32px;background:#fff;"></div>
<div class="ck" style="left:1018px;top:529px"></div>
<div class="a" style="left:1041px;top:518px;width:30px;height:32px;background:#fff;"></div>
<div class="ck" style="left:1050px;top:529px"></div>
<div class="a" style="left:1073px;top:518px;width:30px;height:32px;background:#fff;"></div>
<div class="ck" style="left:1082px;top:529px"></div>
<div class="a" style="left:603px;top:552px;width:148px;height:32px;background:#ebeff5;"></div>
<svg class="a" style="left:607px;top:562px" width="16" height="14" viewBox="0 0 16 14"><g fill="none" stroke="#6a6a6a" stroke-width="1.1"><path d="M0.6 0.6H10L14.5 6L10 11.4H0.6Z"/><path d="M3 5.5L5.5 8L10 3"/></g></svg>
<div class="a" style="left:627px;top:562.63px;font-size:13px;line-height:14.52px;color:#444;letter-spacing:-0.15px">Auftrag in die Syste...</div>
<div class="a" style="left:753px;top:552px;width:30px;height:32px;background:#fff;"></div>
<div class="ck" style="left:762px;top:563px"></div>
<div class="a" style="left:785px;top:552px;width:30px;height:32px;background:#fff;"></div>
<div class="ck" style="left:794px;top:563px"></div>
<div class="a" style="left:817px;top:552px;width:30px;height:32px;background:#fff;"></div>
<div class="ck" style="left:826px;top:563px"></div>
<div class="a" style="left:849px;top:552px;width:30px;height:32px;background:#fff;"></div>
<div class="ck" style="left:858px;top:563px"></div>
<div class="a" style="left:881px;top:552px;width:30px;height:32px;background:#fff;"></div>
<div class="ck" style="left:890px;top:563px"></div>
<div class="a" style="left:913px;top:552px;width:30px;height:32px;background:#fff;"></div>
<div class="ck" style="left:922px;top:563px"></div>
<div class="a" style="left:945px;top:552px;width:30px;height:32px;background:#f4dcc3;"></div>
<div class="ck" style="left:954px;top:563px"></div>
<div class="a" style="left:977px;top:552px;width:30px;height:32px;background:#fff;"></div>
<div class="ck" style="left:986px;top:563px"></div>
<div class="a" style="left:1009px;top:552px;width:30px;height:32px;background:#fff;"></div>
<div class="ck" style="left:1018px;top:563px"></div>
<div class="a" style="left:1041px;top:552px;width:30px;height:32px;background:#fde6cf;"></div>
<div class="ck" style="left:1050px;top:563px"></div>
<div class="a" style="left:1073px;top:552px;width:30px;height:32px;background:#fff;"></div>
<div class="ck" style="left:1082px;top:563px"></div>
<div class="a" style="left:603px;top:586px;width:148px;height:32px;background:#ebeff5;"></div>
<svg class="a" style="left:607px;top:596px" width="16" height="14" viewBox="0 0 16 14"><g fill="none" stroke="#6a6a6a" stroke-width="1.1"><path d="M0.6 0.6H10L14.5 6L10 11.4H0.6Z"/><path d="M3 5.5L5.5 8L10 3"/></g></svg>
<div class="a" style="left:627px;top:596.63px;font-size:13px;line-height:14.52px;color:#444;letter-spacing:-0.15px">Interne Information...</div>
<div class="a" style="left:753px;top:586px;width:30px;height:32px;background:#fff;"></div>
<div class="ck" style="left:762px;top:597px"></div>
<div class="a" style="left:785px;top:586px;width:30px;height:32px;background:#fff;"></div>
<div class="ck" style="left:794px;top:597px"></div>
<div class="a" style="left:817px;top:586px;width:30px;height:32px;background:#fff;"></div>
<div class="ck" style="left:826px;top:597px"></div>
<div class="a" style="left:849px;top:586px;width:30px;height:32px;background:#fff;"></div>
<div class="ck" style="left:858px;top:597px"></div>
<div class="a" style="left:881px;top:586px;width:30px;height:32px;background:#fff;"></div>
<div class="ck" style="left:890px;top:597px"></div>
<div class="a" style="left:913px;top:586px;width:30px;height:32px;background:#fff;"></div>
<div class="ck" style="left:922px;top:597px"></div>
<div class="a" style="left:945px;top:586px;width:30px;height:32px;background:#fff;"></div>
<div class="ck" style="left:954px;top:597px"></div>
<div class="a" style="left:977px;top:586px;width:30px;height:32px;background:#fde6cf;"></div>
<div class="ck" style="left:986px;top:597px"></div>
<div class="a" style="left:1009px;top:586px;width:30px;height:32px;background:#fde6cf;"></div>
<div class="ck" style="left:1018px;top:597px"></div>
<div class="a" style="left:1041px;top:586px;width:30px;height:32px;background:#fde6cf;"></div>
<div class="ck" style="left:1050px;top:597px"></div>
<div class="a" style="left:1073px;top:586px;width:30px;height:32px;background:#fde6cf;"></div>
<div class="ck" style="left:1082px;top:597px"></div>
<div class="a" style="left:603px;top:618px;width:501px;height:36px;background:#f2f2f2;"></div>
<div class="a" style="left:603px;top:620px;width:148px;height:32px;background:#f2f2f2;"></div>
<svg class="a" style="left:607px;top:630px" width="16" height="14" viewBox="0 0 16 14"><g fill="none" stroke="#8a8a8a" stroke-width="1.1"><path d="M0.6 0.6H10L14.5 6L10 11.4H0.6Z"/><path d="M4.5 8V5.5A2.5 2.5 0 0 1 9.5 5.5V8H3.5H10.5M6 9.5A1 1 0 0 0 8 9.5"/></g></svg>
<div class="a" style="left:627px;top:630.63px;font-size:13px;line-height:14.52px;color:#888;letter-spacing:-0.15px">Übergabe an Servic...</div>
<div class="a" style="left:753px;top:620px;width:30px;height:32px;background:#f2f2f2;"></div>
<div class="dk" style="left:762px;top:631px"></div>
<div class="a" style="left:785px;top:620px;width:30px;height:32px;background:#f2f2f2;"></div>
<div class="dk" style="left:794px;top:631px"></div>
<div class="a" style="left:817px;top:620px;width:30px;height:32px;background:#f2f2f2;"></div>
<div class="dk" style="left:826px;top:631px"></div>
<div class="a" style="left:849px;top:620px;width:30px;height:32px;background:#f2f2f2;"></div>
<div class="dk" style="left:858px;top:631px"></div>
<div class="a" style="left:881px;top:620px;width:30px;height:32px;background:#f2f2f2;"></div>
<div class="dk" style="left:890px;top:631px"></div>
<div class="a" style="left:913px;top:620px;width:30px;height:32px;background:#f2f2f2;"></div>
<div class="dk" style="left:922px;top:631px"></div>
<div class="a" style="left:945px;top:620px;width:30px;height:32px;background:#f2f2f2;"></div>
<div class="dk" style="left:954px;top:631px"></div>
<div class="a" style="left:977px;top:620px;width:30px;height:32px;background:#f2f2f2;"></div>
<div class="dk" style="left:986px;top:631px"></div>
<div class="a" style="left:1009px;top:620px;width:30px;height:32px;background:#f2f2f2;"></div>
<div class="dk" style="left:1018px;top:631px"></div>
<div class="a" style="left:1041px;top:620px;width:30px;height:32px;background:#f2f2f2;"></div>
<div class="dk" style="left:1050px;top:631px"></div>
<div class="a" style="left:1073px;top:620px;width:30px;height:32px;background:#f2f2f2;"></div>
<div class="dk" style="left:1082px;top:631px"></div>
<div class="a" style="left:603px;top:654px;width:148px;height:32px;background:#ebeff5;"></div>
<svg class="a" style="left:607px;top:664px" width="16" height="14" viewBox="0 0 16 14"><g fill="none" stroke="#6a6a6a" stroke-width="1.1"><path d="M0.6 0.6H10L14.5 6L10 11.4H0.6Z"/><path d="M3 5.5L5.5 8L10 3"/></g></svg>
<div class="a" style="left:627px;top:664.63px;font-size:13px;line-height:14.52px;color:#444;letter-spacing:-0.15px">Auftrag in Projektm...</div>
<div class="a" style="left:753px;top:654px;width:30px;height:32px;background:#fff;"></div>
<div class="ck" style="left:762px;top:665px"></div>
<div class="a" style="left:785px;top:654px;width:30px;height:32px;background:#fff;"></div>
<div class="ck" style="left:794px;top:665px"></div>
<div class="a" style="left:817px;top:654px;width:30px;height:32px;background:#fff;"></div>
<div class="ck" style="left:826px;top:665px"></div>
<div class="a" style="left:849px;top:654px;width:30px;height:32px;background:#fff;"></div>
<div class="ck" style="left:858px;top:665px"></div>
<div class="a" style="left:881px;top:654px;width:30px;height:32px;background:#fff;"></div>
<div class="ck" style="left:890px;top:665px"></div>
<div class="a" style="left:913px;top:654px;width:30px;height:32px;background:#fff;"></div>
<div class="ck" style="left:922px;top:665px"></div>
<div class="a" style="left:945px;top:654px;width:30px;height:32px;background:#fde6cf;"></div>
<div class="ck" style="left:954px;top:665px"></div>
<div class="a" style="left:977px;top:654px;width:30px;height:32px;background:#fff;"></div>
<div class="ck" style="left:986px;top:665px"></div>
<div class="a" style="left:1009px;top:654px;width:30px;height:32px;background:#fde6cf;"></div>
<div class="ck" style="left:1018px;top:665px"></div>
<div class="a" style="left:1041px;top:654px;width:30px;height:32px;background:#fff;"></div>
<div class="ck" style="left:1050px;top:665px"></div>
<div class="a" style="left:1073px;top:654px;width:30px;height:32px;background:#fff;"></div>
<div class="ck" style="left:1082px;top:665px"></div>
<div class="a" style="left:603px;top:688px;width:148px;height:32px;background:#ebeff5;"></div>
<svg class="a" style="left:607px;top:698px" width="16" height="14" viewBox="0 0 16 14"><g fill="none" stroke="#6a6a6a" stroke-width="1.1"><path d="M0.6 0.6H10L14.5 6L10 11.4H0.6Z"/><path d="M3 5.5L5.5 8L10 3"/></g></svg>
<div class="a" style="left:627px;top:698.63px;font-size:13px;line-height:14.52px;color:#444;letter-spacing:-0.15px">Kick-off durchführen</div>
<div class="a" style="left:753px;top:688px;width:30px;height:32px;background:#fff;"></div>
<div class="ck" style="left:762px;top:699px"></div>
<div class="a" style="left:785px;top:688px;width:30px;height:32px;background:#fff;"></div>
<div class="ck" style="left:794px;top:699px"></div>
<div class="a" style="left:817px;top:688px;width:30px;height:32px;background:#fff;"></div>
<div class="ck" style="left:826px;top:699px"></div>
<div class="a" style="left:849px;top:688px;width:30px;height:32px;background:#fff;"></div>
<div class="ck" style="left:858px;top:699px"></div>
<div class="a" style="left:881px;top:688px;width:30px;height:32px;background:#fff;"></div>
<div class="ck" style="left:890px;top:699px"></div>
<div class="a" style="left:913px;top:688px;width:30px;height:32px;background:#fff;"></div>
<div class="ck" style="left:922px;top:699px"></div>
<div class="a" style="left:945px;top:688px;width:30px;height:32px;background:#fff;"></div>
<div class="ck" style="left:954px;top:699px"></div>
<div class="a" style="left:977px;top:688px;width:30px;height:32px;background:#fff;"></div>
<div class="ck" style="left:986px;top:699px"></div>
<div class="a" style="left:1009px;top:688px;width:30px;height:32px;background:#fff;"></div>
<div class="ck" style="left:1018px;top:699px"></div>
<div class="a" style="left:1041px;top:688px;width:30px;height:32px;background:#fff;"></div>
<div class="ck" style="left:1050px;top:699px"></div>
<div class="a" style="left:1073px;top:688px;width:30px;height:32px;background:#fff;"></div>
<div class="ck" style="left:1082px;top:699px"></div>
<div class="a" style="left:603px;top:722px;width:148px;height:32px;background:#ebeff5;"></div>
<svg class="a" style="left:607px;top:732px" width="16" height="14" viewBox="0 0 16 14"><g fill="none" stroke="#6a6a6a" stroke-width="1.1"><path d="M0.6 0.6H10L14.5 6L10 11.4H0.6Z"/><path d="M3 5.5L5.5 8L10 3"/></g></svg>
<div class="a" style="left:627px;top:732.63px;font-size:13px;line-height:14.52px;color:#444;letter-spacing:-0.15px">Mit dem Kunden ei...</div>
<div class="a" style="left:753px;top:722px;width:30px;height:32px;background:#fff;"></div>
<div class="ck" style="left:762px;top:733px"></div>
<div class="a" style="left:785px;top:722px;width:30px;height:32px;background:#fff;"></div>
<div class="ck" style="left:794px;top:733px"></div>
<div class="a" style="left:817px;top:722px;width:30px;height:32px;background:#fff;"></div>
<div class="ck" style="left:826px;top:733px"></div>
<div class="a" style="left:849px;top:722px;width:30px;height:32px;background:#fff;"></div>
<div class="ck" style="left:858px;top:733px"></div>
<div class="a" style="left:881px;top:722px;width:30px;height:32px;background:#fff;"></div>
<div class="ck" style="left:890px;top:733px"></div>
<div class="a" style="left:913px;top:722px;width:30px;height:32px;background:#fff;"></div>
<div class="ck" style="left:922px;top:733px"></div>
<div class="a" style="left:945px;top:722px;width:30px;height:32px;background:#fff;"></div>
<div class="ck" style="left:954px;top:733px"></div>
<div class="a" style="left:977px;top:722px;width:30px;height:32px;background:#fff;"></div>
<div class="ck" style="left:986px;top:733px"></div>
<div class="a" style="left:1009px;top:722px;width:30px;height:32px;background:#fde6cf;"></div>
<div class="ck" style="left:1018px;top:733px"></div>
<div class="a" style="left:1041px;top:722px;width:30px;height:32px;background:#fff;"></div>
<div class="ck" style="left:1050px;top:733px"></div>
<div class="a" style="left:1073px;top:722px;width:30px;height:32px;background:#fff;"></div>
<div class="ck" style="left:1082px;top:733px"></div>
<div class="a" style="left:603px;top:756px;width:148px;height:32px;background:#ebeff5;"></div>
<svg class="a" style="left:607px;top:766px" width="16" height="14" viewBox="0 0 16 14"><g fill="none" stroke="#6a6a6a" stroke-width="1.1"><circle cx="3.5" cy="3.5" r="2.6"/><circle cx="11.5" cy="3.5" r="2.6"/><path d="M6 3.5H9M7.5 6V8M5 8H10V11.5L7.5 13L5 11.5Z"/></g></svg>
<div class="a" style="left:627px;top:766.63px;font-size:13px;line-height:14.52px;color:#444;letter-spacing:-0.15px">Kick-off Termin ver...</div>
<div class="a" style="left:753px;top:756px;width:30px;height:32px;background:#fff;"></div>
<div class="ck" style="left:762px;top:767px"></div>
<div class="a" style="left:785px;top:756px;width:30px;height:32px;background:#fff;"></div>
<div class="ck" style="left:794px;top:767px"></div>
<div class="a" style="left:817px;top:756px;width:30px;height:32px;background:#fff;"></div>
<div class="ck" style="left:826px;top:767px"></div>
<div class="a" style="left:849px;top:756px;width:30px;height:32px;background:#fff;"></div>
<div class="ck" style="left:858px;top:767px"></div>
<div class="a" style="left:881px;top:756px;width:30px;height:32px;background:#fff;"></div>
<div class="ck" style="left:890px;top:767px"></div>
<div class="a" style="left:913px;top:756px;width:30px;height:32px;background:#fff;"></div>
<div class="ck" style="left:922px;top:767px"></div>
<div class="a" style="left:945px;top:756px;width:30px;height:32px;background:#fff;"></div>
<div class="ck" style="left:954px;top:767px"></div>
<div class="a" style="left:977px;top:756px;width:30px;height:32px;background:#fff;"></div>
<div class="ck" style="left:986px;top:767px"></div>
<div class="a" style="left:1009px;top:756px;width:30px;height:32px;background:#fff;"></div>
<div class="ck" style="left:1018px;top:767px"></div>
<div class="a" style="left:1041px;top:756px;width:30px;height:32px;background:#fff;"></div>
<div class="ck" style="left:1050px;top:767px"></div>
<div class="a" style="left:1073px;top:756px;width:30px;height:32px;background:#fff;"></div>
<div class="ck" style="left:1082px;top:767px"></div>
<div class="a" style="left:603px;top:788px;width:501px;height:36px;background:#f2f2f2;"></div>
<div class="a" style="left:603px;top:790px;width:148px;height:32px;background:#f2f2f2;"></div>
<svg class="a" style="left:607px;top:800px" width="16" height="14" viewBox="0 0 16 14"><g fill="none" stroke="#8a8a8a" stroke-width="1.1"><path d="M0.6 0.6H10L14.5 6L10 11.4H0.6Z"/><path d="M4.5 8V5.5A2.5 2.5 0 0 1 9.5 5.5V8H3.5H10.5M6 9.5A1 1 0 0 0 8 9.5"/></g></svg>
<div class="a" style="left:627px;top:800.63px;font-size:13px;line-height:14.52px;color:#888;letter-spacing:-0.15px">Projekt ist im Qua...</div>
<div class="a" style="left:753px;top:790px;width:30px;height:32px;background:#f2f2f2;"></div>
<div class="dk" style="left:762px;top:801px"></div>
<div class="a" style="left:785px;top:790px;width:30px;height:32px;background:#f2f2f2;"></div>
<div class="dk" style="left:794px;top:801px"></div>
<div class="a" style="left:817px;top:790px;width:30px;height:32px;background:#f2f2f2;"></div>
<div class="dk" style="left:826px;top:801px"></div>
<div class="a" style="left:849px;top:790px;width:30px;height:32px;background:#f2f2f2;"></div>
<div class="dk" style="left:858px;top:801px"></div>
<div class="a" style="left:881px;top:790px;width:30px;height:32px;background:#f2f2f2;"></div>
<div class="dk" style="left:890px;top:801px"></div>
<div class="a" style="left:913px;top:790px;width:30px;height:32px;background:#f2f2f2;"></div>
<div class="dk" style="left:922px;top:801px"></div>
<div class="a" style="left:945px;top:790px;width:30px;height:32px;background:#f2f2f2;"></div>
<div class="dk" style="left:954px;top:801px"></div>
<div class="a" style="left:977px;top:790px;width:30px;height:32px;background:#f2f2f2;"></div>
<div class="dk" style="left:986px;top:801px"></div>
<div class="a" style="left:1009px;top:790px;width:30px;height:32px;background:#f2f2f2;"></div>
<div class="dk" style="left:1018px;top:801px"></div>
<div class="a" style="left:1041px;top:790px;width:30px;height:32px;background:#f2f2f2;"></div>
<div class="dk" style="left:1050px;top:801px"></div>
<div class="a" style="left:1073px;top:790px;width:30px;height:32px;background:#f2f2f2;"></div>
<div class="dk" style="left:1082px;top:801px"></div>
<div class="a" style="left:944px;top:356px;width:1px;height:466px;background:#f6c89a;"></div>
<div class="a" style="left:975px;top:356px;width:1px;height:466px;background:#f6c89a;"></div>
<div class="a" style="left:944px;top:356px;width:1px;height:160px;background:#f0830f;"></div>
<div class="a" style="left:944px;top:518px;width:1px;height:32px;background:#f0830f;"></div>
<div class="a" style="left:944px;top:552px;width:1px;height:32px;background:#f0830f;"></div>
<div class="a" style="left:944px;top:586px;width:1px;height:32px;background:#f0830f;"></div>
<div class="a" style="left:944px;top:620px;width:1px;height:32px;background:#f0830f;"></div>
<div class="a" style="left:944px;top:654px;width:1px;height:32px;background:#f0830f;"></div>
<div class="a" style="left:944px;top:688px;width:1px;height:32px;background:#f0830f;"></div>
<div class="a" style="left:944px;top:722px;width:1px;height:32px;background:#f0830f;"></div>
<div class="a" style="left:944px;top:756px;width:1px;height:32px;background:#f0830f;"></div>
<div class="a" style="left:944px;top:790px;width:1px;height:32px;background:#f0830f;"></div>
<div class="a" style="left:975px;top:356px;width:1px;height:160px;background:#f0830f;"></div>
<div class="a" style="left:975px;top:518px;width:1px;height:32px;background:#f0830f;"></div>
<div class="a" style="left:975px;top:552px;width:1px;height:32px;background:#f0830f;"></div>
<div class="a" style="left:975px;top:586px;width:1px;height:32px;background:#f0830f;"></div>
<div class="a" style="left:975px;top:620px;width:1px;height:32px;background:#f0830f;"></div>
<div class="a" style="left:975px;top:654px;width:1px;height:32px;background:#f0830f;"></div>
<div class="a" style="left:975px;top:688px;width:1px;height:32px;background:#f0830f;"></div>
<div class="a" style="left:975px;top:722px;width:1px;height:32px;background:#f0830f;"></div>
<div class="a" style="left:975px;top:756px;width:1px;height:32px;background:#f0830f;"></div>
<div class="a" style="left:975px;top:790px;width:1px;height:32px;background:#f0830f;"></div>
<div class="a" style="left:603px;top:551px;width:148px;height:1px;background:#f0830f;"></div>
<div class="a" style="left:753px;top:551px;width:30px;height:1px;background:#f0830f;"></div>
<div class="a" style="left:785px;top:551px;width:30px;height:1px;background:#f0830f;"></div>
<div class="a" style="left:817px;top:551px;width:30px;height:1px;background:#f0830f;"></div>
<div class="a" style="left:849px;top:551px;width:30px;height:1px;background:#f0830f;"></div>
<div class="a" style="left:881px;top:551px;width:30px;height:1px;background:#f0830f;"></div>
<div class="a" style="left:913px;top:551px;width:30px;height:1px;background:#f0830f;"></div>
<div class="a" style="left:944px;top:551px;width:32px;height:1px;background:#f0830f;"></div>
<div class="a" style="left:977px;top:551px;width:30px;height:1px;background:#f0830f;"></div>
<div class="a" style="left:1009px;top:551px;width:30px;height:1px;background:#f0830f;"></div>
<div class="a" style="left:1041px;top:551px;width:30px;height:1px;background:#f0830f;"></div>
<div class="a" style="left:1073px;top:551px;width:30px;height:1px;background:#f0830f;"></div>
<div class="a" style="left:603px;top:584px;width:148px;height:1px;background:#f0830f;"></div>
<div class="a" style="left:753px;top:584px;width:30px;height:1px;background:#f0830f;"></div>
<div class="a" style="left:785px;top:584px;width:30px;height:1px;background:#f0830f;"></div>
<div class="a" style="left:817px;top:584px;width:30px;height:1px;background:#f0830f;"></div>
<div class="a" style="left:849px;top:584px;width:30px;height:1px;background:#f0830f;"></div>
<div class="a" style="left:881px;top:584px;width:30px;height:1px;background:#f0830f;"></div>
<div class="a" style="left:913px;top:584px;width:30px;height:1px;background:#f0830f;"></div>
<div class="a" style="left:944px;top:584px;width:32px;height:1px;background:#f0830f;"></div>
<div class="a" style="left:977px;top:584px;width:30px;height:1px;background:#f0830f;"></div>
<div class="a" style="left:1009px;top:584px;width:30px;height:1px;background:#f0830f;"></div>
<div class="a" style="left:1041px;top:584px;width:30px;height:1px;background:#f0830f;"></div>
<div class="a" style="left:1073px;top:584px;width:30px;height:1px;background:#f0830f;"></div>
<div class="a" style="left:958px;top:564px;width:12px;height:13px;background:#eaeef5;"></div>
<svg class="a" style="left:957px;top:562px" width="14" height="17"><path d="M13.5 0.5L7 8L13.5 15.5Z" fill="#c9c9c9"/></svg>
<div class="a" style="left:970px;top:560px;width:152px;height:38px;background:#eaeef6;border:1px solid #c4c4c4;box-shadow:0 0 1px rgba(0,0,0,.1)"></div>
<svg class="a" style="left:980px;top:574px" width="10" height="10"><path d="M1 1L9 9M9 1L1 9" stroke="#333" stroke-width="1.8"/></svg>
<div class="a" style="left:995px;top:573.24px;font-size:13px;line-height:14.52px;color:#333;letter-spacing:-0.1px">Mitwirkung</div>
<svg class="a" style="left:1108px;top:567px" width="10" height="10"><path d="M1 1L9 9M9 1L1 9" stroke="#555" stroke-width="1.1"/></svg>
</body></html>
